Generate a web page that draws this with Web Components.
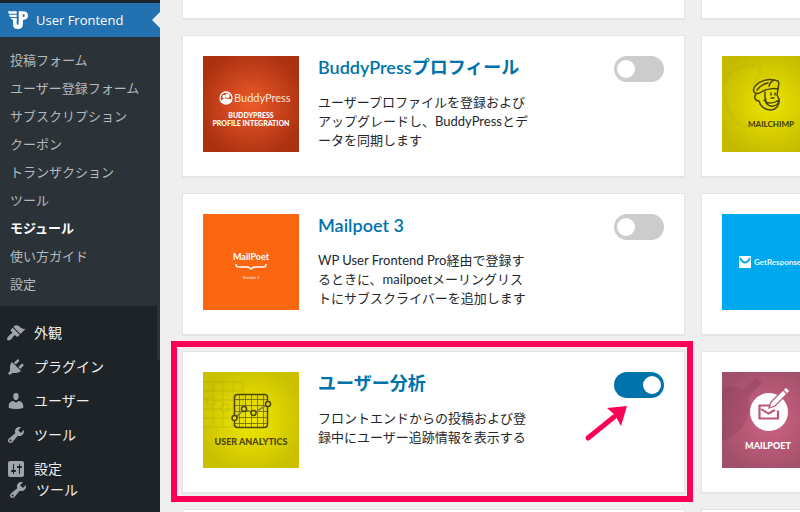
<!DOCTYPE html>
<html lang="ja">
<head>
<meta charset="utf-8">
<meta name="viewport" content="width=device-width, initial-scale=1">
<title>User Frontend モジュール</title>
<style>
  body {
    margin: 0;
    height: 100vh;
    display: flex;
    overflow: hidden;
    background: #efefef;
    color: #23282d;
    font-family: "Open Sans", "Noto Sans CJK JP", sans-serif;
    font-size: 13px;
  }
</style>
</head>
<body>

<admin-sidebar>
  <menu-head slot="head">User Frontend</menu-head>
  <sub-item slot="sub">投稿フォーム</sub-item>
  <sub-item slot="sub">ユーザー登録フォーム</sub-item>
  <sub-item slot="sub">サブスクリプション</sub-item>
  <sub-item slot="sub">クーポン</sub-item>
  <sub-item slot="sub">トランザクション</sub-item>
  <sub-item slot="sub">ツール</sub-item>
  <sub-item slot="sub" current>モジュール</sub-item>
  <sub-item slot="sub">使い方ガイド</sub-item>
  <sub-item slot="sub">設定</sub-item>
  <menu-item icon="appearance">外観</menu-item>
  <menu-item icon="plugins">プラグイン</menu-item>
  <menu-item icon="users">ユーザー</menu-item>
  <menu-item icon="tools">ツール</menu-item>
  <menu-item icon="settings">設定</menu-item>
  <menu-item slot="foot" icon="tools" compact>ツール</menu-item>
</admin-sidebar>

<module-grid>
  <module-panel></module-panel>
  <module-panel></module-panel>

  <module-card heading="BuddyPressプロフィール">
    <module-thumb slot="thumb" name="buddypress"></module-thumb>
    ユーザープロファイルを登録および<br>アップグレードし、BuddyPressとデ<br>ータを同期します
  </module-card>
  <module-card>
    <module-thumb slot="thumb" name="mailchimp"></module-thumb>
  </module-card>

  <module-card heading="Mailpoet 3">
    <module-thumb slot="thumb" name="mailpoet3"></module-thumb>
    WP User Frontend Pro経由で登録す<br>るときに、mailpoetメーリングリス<br>トにサブスクライバーを追加します
  </module-card>
  <module-card>
    <module-thumb slot="thumb" name="getresponse"></module-thumb>
  </module-card>

  <module-card heading="ユーザー分析" active marked>
    <module-thumb slot="thumb" name="analytics"></module-thumb>
    フロントエンドからの投稿および登<br>録中にユーザー追跡情報を表示する
  </module-card>
  <module-card>
    <module-thumb slot="thumb" name="mailpoet"></module-thumb>
  </module-card>

  <module-panel></module-panel>
  <module-panel></module-panel>
</module-grid>

<script>
const icons = {
  appearance: 'M14.48 11.06L7.41 3.99l1.5-1.5c.5-.56 2.3-.47 3.51.32 1.21.8 1.43 1.28 2.91 2.1 1.18.64 2.45 1.26 4.45.85zm-.71.71L6.7 4.7 4.93 6.47c-.39.39-.39 1.02 0 1.41l1.06 1.06c.39.39.39 1.03 0 1.42-.6.6-1.43 1.11-2.21 1.69-.35.26-.7.53-1.01.84C1.43 14.23.4 16.08 1.4 17.07c.99 1 2.84-.03 4.18-1.36.31-.31.58-.66.85-1.02.57-.78 1.08-1.61 1.69-2.21.39-.39 1.02-.39 1.41 0l1.06 1.06c.39.39 1.02.39 1.41 0z',
  plugins: 'M13.11 4.36L9.87 7.6 8 5.73l3.24-3.24c.35-.34 1.05-.2 1.56.32.52.51.66 1.21.31 1.55zm-8 1.77l.91-1.12 9.01 9.01-1.19.84c-.71.71-2.63 1.16-3.82 1.16H6.14L4.9 17.26c-.59.59-1.54.59-2.12 0-.59-.58-.59-1.53 0-2.12l1.24-1.24v-3.88c0-1.13.4-3.19 1.09-3.89zm7.26 3.97l3.24-3.24c.34-.35 1.04-.21 1.55.31.52.51.66 1.21.31 1.55l-3.24 3.25z',
  users: 'M10 9.25c-2.27 0-2.73-3.44-2.73-3.44C7 4.02 7.82 2 9.97 2c2.16 0 2.98 2.02 2.71 3.81 0 0-.41 3.44-2.68 3.44zm0 2.57L12.72 10c2.39 0 4.52 2.33 4.52 4.53v2.49s-3.65 1.13-7.24 1.13c-3.65 0-7.24-1.13-7.24-1.13v-2.49c0-2.25 1.94-4.48 4.47-4.48z',
  tools: 'M16.68 9.77c-1.34 1.34-3.3 1.67-4.95.99l-5.41 6.52c-.99.99-2.59.99-3.58 0s-.99-2.59 0-3.57l6.52-5.42c-.68-1.65-.35-3.61.99-4.95 1.28-1.28 3.12-1.62 4.72-1.06l-2.89 2.89 2.82 2.82 2.86-2.87c.53 1.58.18 3.39-1.08 4.65zM3.81 16.21c.4.39 1.04.39 1.43 0 .4-.4.4-1.04 0-1.43-.39-.4-1.03-.4-1.43 0-.39.39-.39 1.03 0 1.43z',
  settings: 'M18 16V4c0-1.1-.9-2-2-2H4c-1.1 0-2 .9-2 2v12c0 1.1.9 2 2 2h12c1.1 0 2-.9 2-2zM8 11h1c.55 0 1 .45 1 1s-.45 1-1 1H8v1.5c0 .28-.22.5-.5.5s-.5-.22-.5-.5V13H6c-.55 0-1-.45-1-1s.45-1 1-1h1V5.5c0-.28.22-.5.5-.5s.5.22.5.5V11zm5-2h-1c-.55 0-1-.45-1-1s.45-1 1-1h1V5.5c0-.28.22-.5.5-.5s.5.22.5.5V7h1c.55 0 1 .45 1 1s-.45 1-1 1h-1v5.5c0 .28-.22.5-.5.5s-.5-.22-.5-.5V9z'
};

// 96x96 artwork for each module
const thumbs = {
  buddypress: {
    inner: '#ee5a2a', outer: '#ab3110',
    art: `
      <circle cx="23" cy="42" r="6" fill="none" stroke="#fff" stroke-width="1.3"/>
      <circle cx="24.500" cy="39.800" r="2.200" fill="#fff"/>
      <circle cx="21" cy="40.500" r="1.700" fill="#fff"/>
      <path d="M18.500 46c0-4 4-4.500 5.500-3 3-1 5 1 4.500 2.500C27 48 20 48.500 18.500 46z" fill="#fff"/>
      <text x="31" y="46" font-family="Lato" font-size="11" fill="#fbe3da">BuddyPress</text>
      <text x="48" y="62" text-anchor="middle" font-family="Lato" font-weight="900" font-size="7" fill="#fff">BUDDYPRESS</text>
      <text x="48" y="70" text-anchor="middle" font-family="Lato" font-weight="900" font-size="7" fill="#fff">PROFILE INTEGRATION</text>`
  },
  mailchimp: {
    inner: '#ede400', outer: '#c4bb00',
    art: `
      <g fill="none" stroke="#857d00" stroke-opacity=".08" stroke-width="3">
        <path d="M3 26C8 12 20 8 36 10c6 6-2 16-6 20M3 42c4 20 14 30 28 28"/>
      </g>
      <g fill="none" stroke="#4c4712" stroke-width="1.500" stroke-linejoin="round" stroke-linecap="round">
        <path d="M32 36c-2-4 3-10 12-12 4-1 9 0 12 1 2 2 0 5 0 8-4-1-11 0-15 2-3 2-6 4-9 1z"/>
        <path d="M46 27c-5 1-9 4-11 7M52 24c-3 1-4 3-5 6"/>
        <path d="M34 38c-3 4 0 7 3 7 1 5 6 9 11 9 6 0 10-5 9-11l-2-4 1-6"/>
        <path d="M43 36c0 3-1 5 1 8M42 44c3 4 9 4 15 0-1 7-9 8-13 3"/>
        <path d="M49 37v2M53 37v2M49 42h3"/>
      </g>
      <text x="49" y="71" text-anchor="middle" font-family="Lato" font-weight="900" font-size="8" fill="#4c4712">MAILCHIMP</text>`
  },
  mailpoet3: {
    inner: '#fb6611', outer: '#fb6611',
    art: `
      <text x="48" y="46" text-anchor="middle" font-family="Lato" font-weight="700" font-size="9" fill="#fff">MailPoet</text>
      <path d="M33 50c0 3 1 3 4 3h7c2 0 3 1 4 2 1-1 2-2 4-2h7c3 0 4 0 4-3" fill="none" stroke="#fff" stroke-width="1.600"/>
      <text x="48" y="65" text-anchor="middle" font-family="Lato" font-size="4" fill="#fff">Version 3</text>`
  },
  getresponse: {
    inner: '#00a9ee', outer: '#00a9ee',
    art: `
      <rect x="17" y="42" width="12" height="12" rx="1" fill="#fff"/>
      <path d="M18 44c3 6 7 6 10 0" fill="none" stroke="#00a9ee" stroke-width="1.800"/>
      <text x="32" y="51" font-family="Lato" font-weight="700" font-size="8" fill="#e6f7ff">GetResponse</text>`
  },
  analytics: {
    inner: '#f2e900', outer: '#c9c000',
    art: `
      <g fill="none" stroke="#857d00" stroke-opacity=".14" stroke-width="1.500">
        <path d="M0 10h37q3 0 3 3v39q0 3-3 3H0M0 19h40M0 28h40M0 37h40M0 46h40M10 10v45M20 10v45M30 10v45"/>
        <circle cx="8" cy="29" r="4"/><circle cx="22" cy="36" r="4"/>
      </g>
      <rect x="31.500" y="22.500" width="33" height="33" rx="3" fill="none" stroke="#4c4712" stroke-width="1.500"/>
      <path d="M36.500 23v32M42.500 23v32M48.500 23v32M54.500 23v32M60.500 23v32M32 27.500h32M32 33.500h32M32 39.500h32M32 45.500h32M32 51.500h32" stroke="#6b6508" stroke-width=".8"/>
      <path d="M32 46l9-9 10 4 14-9" fill="none" stroke="#8a8350" stroke-width="1.800"/>
      <g fill="#e9e000" stroke="#4c4712" stroke-width="1.500">
        <circle cx="31.500" cy="46" r="2.500"/><circle cx="41" cy="37" r="2.500"/>
        <circle cx="50.500" cy="41" r="2.500"/><circle cx="65" cy="32" r="2.500"/>
      </g>
      <text x="48" y="73" text-anchor="middle" font-family="Lato" font-weight="900" font-size="9" fill="#4c4712">USER ANALYTICS</text>`
  },
  mailpoet: {
    inner: '#cf6384', outer: '#a2506a',
    art: `
      <g fill="#7c3450" fill-opacity=".25">
        <path d="M0 18c8-5 16-4 21 0L34 6l6 5-14 15c5 18-8 40-26 42z"/>
      </g>
      <circle cx="47" cy="40" r="19" fill="#fff"/>
      <path d="M53 33.500H37.500v13h18.500v-8" fill="none" stroke="#ba5877" stroke-width="2.200"/>
      <path d="M39 37l7.500 4.500L53 38" fill="none" stroke="#ba5877" stroke-width="2"/>
      <path d="M47 36l2-6 15-15 4 4-15 15z" fill="#fff" stroke="#ba5877" stroke-width="1.300"/>
      <path d="M61 18l4 4" stroke="#ba5877" stroke-width="1.300"/>
      <text x="46" y="77" text-anchor="middle" font-family="Lato" font-weight="900" font-size="9" fill="#fff">MAILPOET</text>`
  }
};

class AdminSidebar extends HTMLElement {
  constructor() {
    super();
    this.attachShadow({ mode: 'open' }).innerHTML = `
      <style>
        :host {
          display: flex;
          flex-direction: column;
          flex: none;
          width: 160px;
          height: 100vh;
          background: #1d2327;
        }
        nav {
          flex: 1;
          min-height: 0;
          overflow: hidden;
          padding-top: 3px;
        }
        .sub {
          background: #2c3338;
          padding: 9px 0 8px;
        }
        .items {
          padding-top: 10px;
          background: linear-gradient(#2c3338, #2c3338) right top / 3px 54px no-repeat;
        }
        footer {
          height: 32px;
        }
      </style>
      <nav>
        <slot name="head"></slot>
        <div class="sub"><slot name="sub"></slot></div>
        <div class="items"><slot></slot></div>
      </nav>
      <footer><slot name="foot"></slot></footer>
    `;
  }
}

class MenuHead extends HTMLElement {
  constructor() {
    super();
    this.attachShadow({ mode: 'open' }).innerHTML = `
      <style>
        :host {
          display: block;
          background: #2271b1;
        }
        a {
          display: flex;
          align-items: center;
          gap: 8px;
          height: 34px;
          padding-left: 8px;
          color: #fff;
          font-size: 13px;
          text-decoration: none;
        }
        span {
          flex: 1;
        }
        i {
          border: 8px solid transparent;
          border-left: 0;
          border-right-color: #efefef;
        }
      </style>
      <a href="#">
        <svg width="20" height="20" viewBox="0 0 20 20" fill="#fff" aria-hidden="true">
          <path d="M0 1.300h8.700v2.400H.8zM1 4.800h7.700v2.200H2zM2.500 8h6.200v2.200H5z"/>
          <path d="M5 9.500h3.700v4q0 1.300 1 1.300t1-1.300V1.300h4.300q5 0 5 4.300t-5 4.300v3.600q0 5.500-5.200 5.500T5 13.500zM14.800 4v3q2 0 2-1.500t-2-1.500z"/>
        </svg>
        <span><slot></slot></span>
        <i></i>
      </a>
    `;
  }
}

class SubItem extends HTMLElement {
  constructor() {
    super();
    this.attachShadow({ mode: 'open' }).innerHTML = `
      <style>
        :host {
          display: block;
        }
        a {
          display: block;
          padding-left: 10px;
          line-height: 28px;
          color: #b4b9be;
          text-decoration: none;
        }
        :host([current]) a {
          color: #fff;
          font-weight: 700;
        }
      </style>
      <a href="#"><slot></slot></a>
    `;
  }
}

class MenuItem extends HTMLElement {
  constructor() {
    super();
    this.attachShadow({ mode: 'open' }).innerHTML = `
      <style>
        :host {
          display: block;
        }
        a {
          display: flex;
          align-items: center;
          gap: 8px;
          height: 34px;
          padding-left: 6px;
          color: #f0f0f1;
          font-size: 14px;
          line-height: 20px;
          text-decoration: none;
        }
        :host([compact]) a {
          height: 20px;
          padding-left: 8px;
        }
        svg {
          fill: #a0a5aa;
        }
      </style>
      <a href="#">
        <svg width="20" height="20" viewBox="0 0 20 20" aria-hidden="true">
          <path d="${icons[this.getAttribute('icon')]}"/>
        </svg>
        <slot></slot>
      </a>
    `;
  }
}

class ModuleGrid extends HTMLElement {
  constructor() {
    super();
    this.attachShadow({ mode: 'open' }).innerHTML = `
      <style>
        :host {
          display: block;
          flex: 1;
          min-width: 0;
          overflow: hidden;
          padding-left: 22px;
        }
        /* second column runs past the window edge */
        .grid {
          display: grid;
          grid-template-columns: minmax(0, 1fr) 120px;
          gap: 16px;
          margin-right: -21px;
        }
      </style>
      <div class="grid"><slot></slot></div>
    `;
  }
}

const panelBox = `
  box-sizing: border-box;
  background: #fff;
  border: 1px solid #e5e5e5;
  box-shadow: 0 1px 1px rgba(0, 0, 0, .04);
`;

class ModulePanel extends HTMLElement {
  constructor() {
    super();
    this.attachShadow({ mode: 'open' }).innerHTML = `
      <style>
        :host {
          display: block;
          height: 19px;
          ${panelBox}
        }
        :host(:first-child),
        :host(:nth-child(2)) {
          border-top: 0;
        }
      </style>
    `;
  }
}

class ModuleThumb extends HTMLElement {
  constructor() {
    super();
    const { inner, outer, art } = thumbs[this.getAttribute('name')];
    this.attachShadow({ mode: 'open' }).innerHTML = `
      <style>
        :host {
          display: block;
          flex: none;
          width: 96px;
          height: 96px;
          background: radial-gradient(circle at 50% 50%, ${inner}, ${outer} 80%);
        }
        svg {
          display: block;
        }
      </style>
      <svg width="96" height="96" viewBox="0 0 96 96">${art}</svg>
    `;
  }
}

class ModuleCard extends HTMLElement {
  constructor() {
    super();
    const heading = this.getAttribute('heading');
    const body = heading ? `
      <div class="text">
        <h3><label for="toggle">${heading}</label></h3>
        <p><slot></slot></p>
      </div>
      <input id="toggle" type="checkbox" ${this.hasAttribute('active') ? 'checked' : ''}>
    ` : '';
    const mark = this.hasAttribute('marked') ? `
      <div class="frame"></div>
      <svg class="arrow" width="44" height="36" viewBox="0 0 44 36" aria-hidden="true">
        <path d="M4 32L30 11" stroke="#ff0055" stroke-width="5" stroke-linecap="round"/>
        <path d="M43 0L23 2l8 7 1 2 5 9z" fill="#ff0055"/>
      </svg>
    ` : '';

    this.attachShadow({ mode: 'open' }).innerHTML = `
      <style>
        :host {
          display: flex;
          align-items: flex-start;
          gap: 19px;
          min-height: 142px;
          padding: 20px;
          position: relative;
          font-family: Lato, "Noto Sans CJK JP", sans-serif;
          ${panelBox}
        }
        .text {
          flex: 1;
          min-width: 0;
        }
        h3 {
          margin: 0 0 15px;
          color: #0073aa;
          font-size: 18px;
          font-weight: 600;
          line-height: 22px;
        }
        p {
          margin: 0;
          line-height: 19px;
          white-space: nowrap;
        }
        input {
          appearance: none;
          flex: none;
          box-sizing: border-box;
          width: 50px;
          height: 26px;
          margin: 0;
          padding: 4px 3px;
          border-radius: 13px;
          background: #ccc;
        }
        input::before {
          content: "";
          display: block;
          width: 18px;
          height: 18px;
          border-radius: 50%;
          background: #fff;
        }
        input:checked {
          background: #0073aa;
        }
        input:checked::before {
          margin-left: auto;
        }
        .frame {
          position: absolute;
          inset: -11px -9px -10px -12px;
          border: 6px solid #ff0055;
          pointer-events: none;
          z-index: 1;
        }
        .arrow {
          position: absolute;
          top: 54px;
          right: 56px;
        }
      </style>
      <slot name="thumb"></slot>
      ${body}
      ${mark}
    `;
  }
}

customElements.define('admin-sidebar', AdminSidebar);
customElements.define('menu-head', MenuHead);
customElements.define('sub-item', SubItem);
customElements.define('menu-item', MenuItem);
customElements.define('module-grid', ModuleGrid);
customElements.define('module-panel', ModulePanel);
customElements.define('module-thumb', ModuleThumb);
customElements.define('module-card', ModuleCard);
</script>
</body>
</html>
